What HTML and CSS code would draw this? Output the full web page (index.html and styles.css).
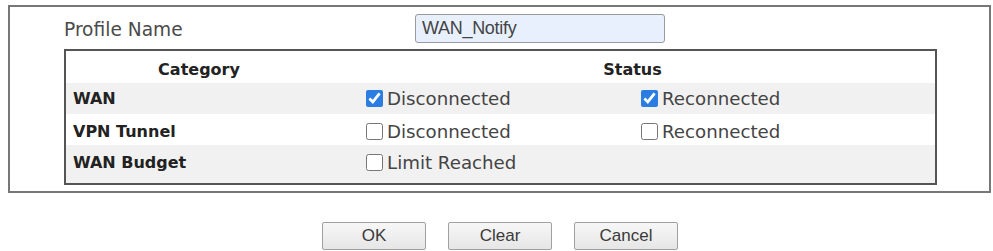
FILE: index.html
```html
<!DOCTYPE html>
<html>
<head>
<meta charset="utf-8">
<link rel="stylesheet" href="styles.css">
</head>
<body>
<div class="panel">
  <div class="profile-row">
    <span class="profile-label">Profile Name</span>
    <input class="profile-input" type="text" value="WAN_Notify">
  </div>
  <div class="table">
    <div class="row head">
      <div class="cell cat-head">Category</div>
      <div class="cell status-head">Status</div>
    </div>
    <div class="row alt">
      <div class="cell label">WAN</div>
      <label class="cell opt"><input type="checkbox" checked>Disconnected</label>
      <label class="cell opt"><input type="checkbox" checked>Reconnected</label>
    </div>
    <div class="row">
      <div class="cell label">VPN Tunnel</div>
      <label class="cell opt"><input type="checkbox">Disconnected</label>
      <label class="cell opt"><input type="checkbox">Reconnected</label>
    </div>
    <div class="row alt">
      <div class="cell label">WAN Budget</div>
      <label class="cell opt"><input type="checkbox">Limit Reached</label>
      <div class="cell"></div>
    </div>
  </div>
</div>
<div class="buttons">
  <button class="btn">OK</button>
  <button class="btn">Clear</button>
  <button class="btn">Cancel</button>
</div>
</body>
</html>
```
FILE: styles.css
```css
html, body {
  margin: 0;
  padding: 0;
  background: #fff;
}
body {
  font-family: "DejaVu Sans", Verdana, sans-serif;
  color: #333;
  width: 993px;
  height: 251px;
  overflow: hidden;
}
.panel {
  box-sizing: border-box;
  margin: 5px 0 0 8px;
  width: 983px;
  height: 188px;
  border: 2px solid #777;
  padding: 0 0 0 54px;
}
.profile-row {
  display: flex;
  align-items: center;
  height: 42px;
}
.profile-label {
  font-size: 18.6px;
  width: 351px;
  color: #4a4a4a;
  padding-top: 2px;
}
.profile-input {
  box-sizing: border-box;
  width: 250px;
  height: 29px;
  margin: 1px 0 0 0;
  border: 1px solid #9a9a9a;
  border-radius: 3px;
  background: #e8f0fe;
  font-family: "Liberation Sans", Arial, sans-serif;
  font-size: 18px;
  letter-spacing: -0.3px;
  color: #444;
  padding: 0 6px;
}
.table {
  box-sizing: border-box;
  width: 873px;
  height: 136px;
  border: 2px solid #555;
}
.row {
  display: grid;
  grid-template-columns: 262px 275px 1fr;
  height: 31px;
  align-items: center;
}
.row.head {
  height: 32px;
  padding-top: 4px;
  box-sizing: border-box;
}
.row.alt {
  background: #f1f1f1;
}
.row.alt:last-child {
  height: 38px;
  padding-bottom: 4px;
  box-sizing: border-box;
}
.row:nth-child(3) {
  padding-top: 4px;
  box-sizing: border-box;
}
.cell {
  font-size: 16px;
  white-space: nowrap;
}
.cat-head {
  font-weight: bold;
  text-align: center;
  padding-left: 4px;
  color: #222;
}
.status-head {
  grid-column: 2 / 4;
  font-weight: bold;
  text-align: center;
  padding-left: 2px;
  color: #222;
}
.label {
  font-weight: bold;
  padding-left: 7px;
  color: #222;
}
.opt {
  display: flex;
  align-items: center;
  padding-left: 38px;
  font-size: 18.2px;
  color: #444;
}
.opt input {
  width: 17px;
  height: 17px;
  margin: 0 4px 0 0;
  accent-color: #2b7de1;
}
.buttons {
  display: flex;
  justify-content: center;
  gap: 22px;
  margin-top: 29px;
  padding-left: 7px;
}
.btn {
  box-sizing: border-box;
  width: 104px;
  height: 28px;
  border: 1px solid #a0a0a0;
  border-radius: 2px;
  background: linear-gradient(#f7f7f7, #e6e6e6);
  font-family: "Liberation Sans", Arial, sans-serif;
  font-size: 17px;
  color: #3a3a3a;
  padding: 0;
}
```
